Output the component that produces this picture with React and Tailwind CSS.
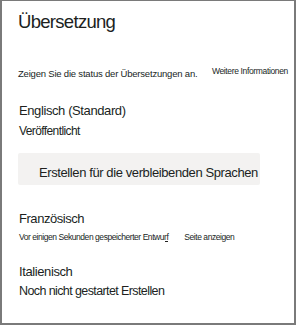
export default function App() {
  return (
    <div
      className="w-[296px] h-[325px] bg-white border-l-2 border-r-2 border-b-2 border-t border-[#7a7a7a] text-[#201f1e] overflow-hidden"
      style={{ fontFamily: '"Liberation Sans", Arial, sans-serif' }}
    >
      <div className="pl-4 pr-1">
        <h1 className="pt-[9px] text-[18.5px] leading-[24px] font-normal tracking-[-0.7px]">Übersetzung</h1>

        <div className="mt-[31px] flex items-start">
          <p className="text-[9.5px] leading-[14px] pt-[2px] tracking-[-0.2px]">
            Zeigen Sie die status der Übersetzungen an.
          </p>
          <a className="ml-auto mr-[2px] text-[8.5px] leading-[12px] tracking-[-0.35px]">Weitere Informationen</a>
        </div>

        <div className="mt-[21px]">
          <div className="text-[13px] leading-[18px] tracking-[-0.4px] pl-[1px]">Englisch (Standard)</div>
          <div className="mt-[3px] text-[12px] leading-[16px] tracking-[-0.6px] pl-[1px]">Veröffentlicht</div>
        </div>

        <button className="mt-[14px] w-[242px] h-[32px] rounded-[2px] bg-[#f3f2f1] pl-[21px] pt-[8px] text-left text-[13px] leading-[18px] tracking-[-0.4px] whitespace-nowrap">
          Erstellen für die verbleibenden Sprachen
        </button>

        <div className="mt-[25px]">
          <div className="text-[13px] leading-[18px] tracking-[-0.45px] pl-[1px]">Französisch</div>
          <div className="mt-[3px] flex items-start text-[8.5px] leading-[12px] tracking-[-0.45px] pl-[1px]">
            <span>Vor einigen Sekunden gespeicherter Entwurf</span>
            <span className="mt-[10px] ml-[-3px] w-[3px] h-px bg-[#201f1e]" />
            <span className="ml-[16px]">Seite anzeigen</span>
          </div>
        </div>

        <div className="mt-[20px]">
          <div className="text-[13px] leading-[18px] tracking-[-0.4px] pl-[1px]">Italienisch</div>
          <div className="mt-[2px] text-[12.5px] leading-[16px] tracking-[-0.6px] pl-[1px]">Noch nicht gestartet Erstellen</div>
        </div>
      </div>
    </div>
  );
}
